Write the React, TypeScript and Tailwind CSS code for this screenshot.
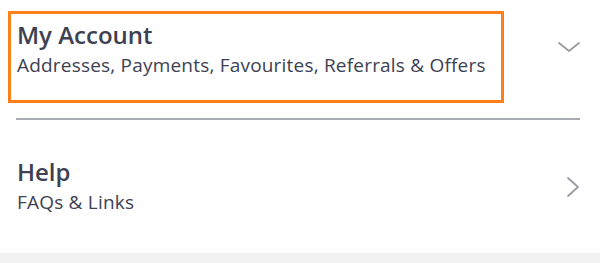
import React from "react";

function ChevronDown() {
  return (
    <svg width="24" height="12" viewBox="0 0 24 12" fill="none">
      <path d="M2 2 L12 10 L22 2" stroke="#9a9aa3" strokeWidth="1.8" strokeLinecap="round" strokeLinejoin="round" />
    </svg>
  );
}

function ChevronRight() {
  return (
    <svg width="14" height="22" viewBox="0 0 14 22" fill="none">
      <path d="M2 2 L12 11 L2 20" stroke="#9a9aa3" strokeWidth="1.8" strokeLinecap="round" strokeLinejoin="round" />
    </svg>
  );
}

export default function App() {
  return (
    <div className="w-[600px] h-[263px] bg-white flex flex-col" style={{ fontFamily: '"Open Sans", "Liberation Sans", sans-serif' }}>
      <div className="flex items-start pt-[11px]">
        <div className="ml-[8px] w-[496px] h-[92px] border-[3px] border-[#fc8019] pl-[6px] pt-[6px]">
          <div className="text-[24px] leading-[30px] font-semibold text-[#3d4152]">My Account</div>
          <div className="text-[19px] leading-[24px] mt-[3px] tracking-[0.2px] text-[#3d4152]">Addresses, Payments, Favourites, Referrals &amp; Offers</div>
        </div>
        <div className="ml-[53px] mt-[30px]">
          <ChevronDown />
        </div>
      </div>
      <div className="ml-4 mr-5 mt-[15px] h-[2px] bg-[#a9abb2]" />
      <div className="flex justify-between pl-[17px] pr-[20px] h-[133px]">
        <div className="pt-[37px]">
          <div className="text-[24px] leading-[30px] font-semibold text-[#3d4152]">Help</div>
          <div className="text-[19px] leading-[24px] mt-[3px] tracking-[0.2px] text-[#3d4152]">FAQs &amp; Links</div>
        </div>
        <div className="self-center">
          <ChevronRight />
        </div>
      </div>
      <div className="flex-1 bg-[#f2f2f3]" />
    </div>
  );
}
